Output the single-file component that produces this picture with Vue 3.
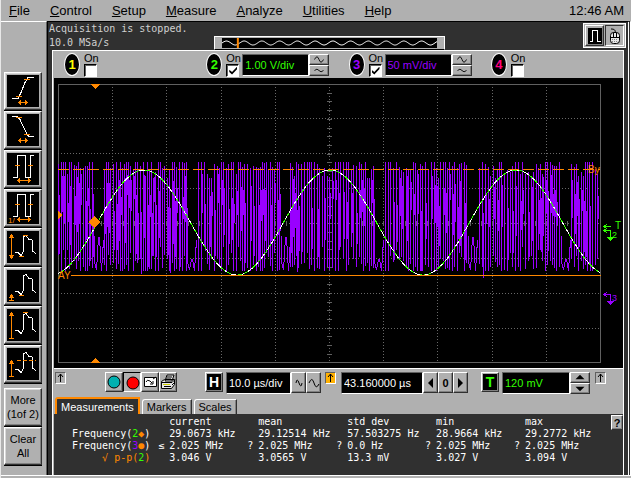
<template>
  <div class="scope">
    <header class="menubar">
      <nav>
        <a v-for="item in menu" :key="item" href="#"><u>{{ item[0] }}</u>{{ item.slice(1) }}</a>
      </nav>
      <time>12:46 AM</time>
    </header>

    <div class="body">
      <aside class="sidebar">
        <button v-for="tool in tools" :key="tool.name" class="tool" :aria-label="tool.name">
          <svg viewBox="0 0 32 32" shape-rendering="crispEdges">
            <rect width="32" height="32" fill="#000" />
            <path :d="tool.white" class="w" />
            <path :d="tool.orange" class="o" />
            <path v-if="tool.dash" :d="tool.dash" class="o" stroke-dasharray="4 2" />
            <path :d="tool.heads" fill="#ff8800" />
            <text v-if="tool.text" x="1" y="31" class="tool-text">{{ tool.text }}</text>
          </svg>
        </button>
        <button class="more">More<br>(1of 2)</button>
        <button>Clear<br>All</button>
      </aside>

      <main class="main">
        <section class="status">
          <p>Acquisition is stopped.<br>10.0 MSa/s</p>
          <div class="navigator">
            <svg viewBox="0 0 217 10" preserveAspectRatio="none">
              <rect width="217" height="10" fill="#000" />
              <path :d="navWave" class="w" />
              <rect x="15" width="2" height="10" fill="#ff8800" />
            </svg>
          </div>
          <div class="modes">
            <button class="pulse" aria-label="Waveform mode">
              <svg viewBox="0 0 14 16" shape-rendering="crispEdges">
                <path d="M2 13.5h2.500v-11h5v11h3" class="w" />
              </svg>
            </button>
            <button class="mouse" aria-label="Mouse mode">
              <svg viewBox="0 0 14 16">
                <path d="M3 1c3 0 5 1 4 4" fill="none" stroke="#000" />
                <rect x="2.500" y="4.500" width="9" height="11" rx="3" fill="#e8e8e8" stroke="#000" />
                <path d="M2.500 9.500h9M5.500 4.500v5M8.500 4.500v5" stroke="#000" />
                <path d="M4 11.500h6M4 13.500h6" stroke="#888" stroke-dasharray="1 1" />
              </svg>
            </button>
          </div>
        </section>

        <section class="panel">
          <div class="channels">
            <div v-for="ch in channels" :key="ch.id" class="channel" :class="'c' + ch.id">
              <span class="badge">{{ ch.id }}</span>
              <label class="on">On<input v-model="ch.on" type="checkbox"></label>
              <template v-if="ch.scale">
                <input v-model="ch.scale" class="field scale" :aria-label="'Channel ' + ch.id + ' scale'">
                <span class="stack">
                  <button aria-label="Larger">
                    <svg viewBox="0 0 18 10"><path d="M4 5q3-6 5 0t5 0" class="k" /></svg>
                  </button>
                  <button aria-label="Smaller">
                    <svg viewBox="0 0 18 10"><path d="M4 5q3-3 5 0t5 0" class="k" /></svg>
                  </button>
                </span>
              </template>
            </div>
          </div>

          <svg class="plot" viewBox="54 78 569 290" shape-rendering="crispEdges">
            <rect x="58.500" y="84.500" width="542" height="278" class="frame" />
            <path :d="grid" class="grid" />
            <path :d="ticks" class="frame" />
            <path :d="burst" class="purple" />
            <path :d="sine" class="green" />
            <path :d="sine" class="glint" />
            <path d="M58 169.500H600" class="o" stroke-dasharray="11 4" />
            <path d="M71 275.500H601" class="o" />
            <path d="M91 84h9l-4 5h-1zM91 363h9l-4-5h-1zM94.500 216l6 6-6 6-6-6zM58 211l4 4-4 5z" fill="#ff8800" />
            <text x="58" y="279" fill="#ff8800">AY</text>
            <text x="588" y="173" fill="#ff8800">By</text>
            <path d="M604 226.500h7M604 230.500h6.500v6M607 224l-3 2.500 3 2.500M607 228l-3 2.500 3 2.500" class="g" />
            <path d="M607 237h7l-3 4h-1z" fill="#33ff00" />
            <text x="612" y="238" fill="#33ff00" class="small">2</text>
            <text x="615" y="229" fill="#33ff00">T</text>
            <path d="M604 294.500h6.500v6M607 292l-3 2.500 3 2.500" class="purple" />
            <path d="M607 301h7l-3 4h-1z" fill="#9900ff" />
            <text x="612" y="301" fill="#9900ff" class="small">3</text>
          </svg>

          <div class="controls">
            <button class="marker" aria-label="Left edge"><svg viewBox="0 0 9 10"><path :d="upArrow" class="k" /></svg></button>
            <div class="group run">
              <button aria-label="Run"><svg viewBox="0 0 16 18"><circle cx="8" cy="9" r="6" fill="#00b0b0" stroke="#000" /></svg></button>
              <button class="pressed" aria-label="Stop"><svg viewBox="0 0 16 18"><circle cx="9" cy="10" r="6" fill="#f00" stroke="#000" /></svg></button>
              <button aria-label="Clear display">
                <svg viewBox="0 0 16 18">
                  <path d="M2.500 4.500h12v9h-12z" fill="#fff" stroke="#000" />
                  <path d="M4 9q1-3 4-1l2 2M8 11h3V8M11 6l3-2" fill="none" stroke="#000" />
                </svg>
              </button>
              <button aria-label="Print">
                <svg viewBox="0 0 16 18">
                  <path d="M5 8l2-6h7l-2 6zM1.500 8.500l3-2h10v5l-3 4h-10z" fill="#e8e8e8" stroke="#000" />
                  <path d="M7 4h5M6 6h5M2 9.500h10M4 13.500h7M12 9.500l3-3M12 12l3-3" stroke="#000" />
                  <path d="M3 11.500h7" stroke="#cc0" />
                </svg>
              </button>
            </div>
            <div class="group horizontal">
              <button class="letter"><b>H</b></button>
              <input v-model="timebase" class="field time" aria-label="Horizontal scale">
              <button aria-label="Faster"><svg viewBox="0 0 13 18"><path d="M4 9q1-6 3 0t3 0" class="k" /></svg></button>
              <button aria-label="Slower"><svg viewBox="0 0 13 18"><path d="M2 9q3-7 5 0t5 1" class="k" /></svg></button>
            </div>
            <button class="marker amber" aria-label="Trigger position"><svg viewBox="0 0 9 10"><path :d="upArrow" class="k" /></svg></button>
            <div class="group delay">
              <input v-model="position" class="field position" aria-label="Horizontal position">
              <button aria-label="Move left"><svg viewBox="0 0 13 18"><path d="M9 4v10L4 9z" /></svg></button>
              <button class="zero">0</button>
              <button aria-label="Move right"><svg viewBox="0 0 13 18"><path d="M4 4v10l5-5z" /></svg></button>
            </div>
            <div class="group trigger">
              <button class="letter lime"><b>T</b></button>
              <input v-model="level" class="field level" aria-label="Trigger level">
              <span class="stack">
                <button aria-label="Raise"><svg viewBox="0 0 18 10"><path d="M4 7h10L9 2z" /></svg></button>
                <button aria-label="Lower"><svg viewBox="0 0 18 10"><path d="M4 3h10L9 8z" /></svg></button>
              </span>
            </div>
            <button class="marker" aria-label="Right edge"><svg viewBox="0 0 9 10"><path :d="upArrow" class="k" /></svg></button>
          </div>

          <div class="tabs">
            <button v-for="tab in tabs" :key="tab" :class="{ active: tab === current }" @click="current = tab">{{ tab }}</button>
          </div>

          <div class="results">
            <table>
              <thead>
                <tr>
                  <td></td>
                  <th v-for="h in headings" :key="h" scope="col"><i></i>{{ h }}</th>
                </tr>
              </thead>
              <tbody>
                <tr v-for="(row, r) in rows" :key="r">
                  <th scope="row" :class="{ orange: row.check }">
                    {{ row.label }}(<span :class="'t' + row.ch">{{ row.ch }}</span><span class="orange">{{ row.mark }}</span>)
                  </th>
                  <td v-for="(value, i) in row.values" :key="i"><i>{{ row.flags[i] }}</i>{{ value }}</td>
                </tr>
              </tbody>
            </table>
            <button class="help">?</button>
          </div>
        </section>
      </main>
    </div>
  </div>
</template>

<script setup>
import { ref } from 'vue'

const menu = ['File', 'Control', 'Setup', 'Measure', 'Analyze', 'Utilities', 'Help']
const tabs = ['Measurements', 'Markers', 'Scales']
const headings = ['current', 'mean', 'std dev', 'min', 'max']

const current = ref('Measurements')
const timebase = ref('10.0 µs/div')
const position = ref('43.160000 µs')
const level = ref('120 mV')

const channels = ref([
  { id: 1, on: false },
  { id: 2, on: true, scale: '1.00 V/div' },
  { id: 3, on: true, scale: '50 mV/div' },
  { id: 4, on: false }
])

const rows = [
  { label: 'Frequency', ch: 2, mark: '◆', flags: [], values: ['29.0673 kHz', '29.12514 kHz', '57.503275 Hz', '28.9664 kHz', '29.2772 kHz'] },
  { label: 'Frequency', ch: 3, mark: '●', flags: ['≤', '?', '?', '?', '?'], values: ['2.025 MHz', '2.025 MHz', '0.0 Hz', '2.025 MHz', '2.025 MHz'] },
  { label: '√ p-p', ch: 2, mark: '', check: true, flags: [], values: ['3.046 V', '3.0565 V', '13.3 mV', '3.027 V', '3.094 V'] }
]

const pulse = 'M6 24.5h4.500v-22h8v22h5v-22h3'
const peak = 'M8 21.500h3l3 3 2-3 1-16 2-1 3 4h3l1 12 3 2'
const tools = [
  { name: 'Rise time', white: 'M5 23.500h6l3-6 4-10 3-5h6', orange: 'M9 21.500h6M17 4.500h6M12 27.500h8', heads: 'M11 27.500l3-3v6zM21 27.500l-3-3v6z' },
  { name: 'Fall time', white: 'M5 2.500h5l3 3 7 15 2 2h5', orange: 'M9 3.500h6M17 20.500h6M12 26.500h8', heads: 'M11 26.500l3-3v6zM21 26.500l-3-3v6z' },
  { name: 'Period', white: pulse, orange: 'M8 12.500h5M21 12.500h5M11 27.500h12', heads: 'M10 27.500l3-3v6zM24 27.500l-3-3v6z' },
  { name: 'Frequency', white: pulse, orange: 'M8 12.500h5M21 12.500h5M11 27.500h12', heads: 'M10 27.500l3-3v6zM24 27.500l-3-3v6z', text: '1/' },
  { name: 'V p-p', white: peak, orange: 'M4.500 5v21M16 4.500h5M12 25.500h5', heads: 'M4.500 3l3 4h-6zM4.500 28l3-4h-6z' },
  { name: 'V min', white: peak, orange: 'M12 25.500h5M4.500 27v3M2 30.500h5', heads: 'M4.500 24l3 4h-6z' },
  { name: 'V max', white: peak, orange: 'M4.500 5v24M2 29.500h5M16 3.500h5', heads: 'M4.500 3l3 4h-6z' },
  { name: 'V avg', white: peak, orange: 'M4.500 14v14M2 28.500h5', dash: 'M10 12.500h19', heads: 'M4.500 12l3 4h-6z' }
]

const upArrow = 'M4.500 9V1M2 4l2.500-3L7 4'

let navWave = 'M0 5'
for (let x = 1; x <= 217; x++) navWave += `L${x} ${(5 - 2 * Math.sin(x / 2.85)).toFixed(1)}`

// graticule: 10 x 8 divisions
let grid = ''
for (let i = 1; i < 10; i++) grid += `M${Math.round(58 + i * 54.2)}.5 84V362`
for (let i = 1; i < 8; i++) grid += `M58 ${Math.round(83 + i * 35)}.5H600`

let ticks = ''
for (let i = 1; i < 32; i++) ticks += `M327 ${Math.round(84 + i * 8.7)}.5h5`
for (let i = 1; i < 50; i++) ticks += `M${Math.round(58 + i * 10.84)}.5 221v5`

let sine = ''
for (let x = 58; x <= 600; x++) {
  const y = 222.5 - 52.5 * Math.cos((2 * Math.PI * (x - 144)) / 186)
  sine += `${sine ? 'L' : 'M'}${x} ${y.toFixed(1)}`
}

// carrier on channel 3, thinning out wherever the slow sine crosses its centre
let seed = 7
function rand(n) {
  seed = (seed * 1103515245 + 12345) % 2147483648
  return Math.floor((seed / 2147483648) * n)
}

let burst = ''
for (let x = 58; x < 600; x += 2 + (rand(5) > 2 ? 1 : 0)) {
  const gap = (x - 94) % 93.4
  if (gap >= 0 && gap < 9) continue
  const top = 162 + rand(3) * rand(9)
  const bottom = 271 - rand(4) * rand(9)
  burst += `M${x}.5 ${top}V${bottom}`
  if (rand(10) > 2) {
    const start = 174 + rand(40)
    burst += `M${x + 1}.5 ${start}V${start + 18 + rand(48)}`
  }
}
for (let i = 0; i < 6; i++) {
  const x = Math.round(94 + i * 93.4)
  const top = i % 2 ? 259 : 237
  burst += `M${x}.5 236V262L${x + 2}.5 270L${x + 4}.5 ${top}h1L${x + 7}.5 271L${x + 9}.5 240`
}
</script>

<style>
body {
  background: #b0b0b0;
}
</style>

<style scoped>
.scope {
  display: flex;
  flex-direction: column;
  min-height: 100vh;
  box-sizing: border-box;
  background: #b0b0b0;
  border-left: 1px solid #e8e8e8;
  color: #000;
  font: 11px "Liberation Sans", Arial, sans-serif;
}

button,
input {
  box-sizing: border-box;
  margin: 0;
  padding: 0;
  font: inherit;
}

button {
  background: #b0b0b0;
  border: 1px solid;
  border-color: #fff #303030 #303030 #fff;
  border-radius: 0;
  box-shadow: inset -1px -1px #808080;
  color: #000;
}

svg {
  display: block;
}

.w { fill: none; stroke: #fff; }
.o { fill: none; stroke: #ff8800; }
.k { fill: none; stroke: #000; }
.g { fill: none; stroke: #33ff00; }
.purple { fill: none; stroke: #9900ff; }

.menubar {
  display: flex;
  justify-content: space-between;
  height: 21px;
  padding: 0 7px 0 8px;
  font-size: 13px;
  line-height: 21px;
}

.menubar nav {
  display: flex;
  gap: 20px;
}

.menubar a {
  color: #000;
  text-decoration: none;
}

.body {
  display: flex;
  flex: 1;
  border-bottom: 2px solid #b0b0b0;
  box-shadow: inset 0 -1px #fff;
  padding-bottom: 1px;
}

.sidebar {
  display: flex;
  flex-direction: column;
  gap: 1px;
  flex: none;
  width: 38px;
  padding: 50px 4px 0 3px;
  border-top: 1px solid #fff;
  border-right: 1px solid #606060;
}

.sidebar button {
  height: 38px;
  box-shadow: inset -1px -1px #808080, inset 1px 1px #d8d8d8, 0 1px #000;
  line-height: 14px;
  white-space: nowrap;
}

.sidebar .more {
  margin-top: 4px;
}

.tool svg {
  width: 32px;
  height: 32px;
  margin: 0 auto;
}

.tool-text {
  font-size: 8px;
  fill: #ff8800;
}

.main {
  display: flex;
  flex-direction: column;
  flex: 1;
  min-width: 0;
  background: #303030;
  border-top: 1px solid #000;
  border-left: 1px solid #000;
  border-right: 3px double #fff;
  padding: 0 4px 0 4px;
}

.status {
  display: flex;
  justify-content: space-between;
  height: 28px;
}

.status p {
  flex: 0 0 165px;
  margin: 0 0 0 -3px;
  color: #d0d0d0;
  font: 10px/14px "DejaVu Sans Mono", monospace;
}

.navigator {
  align-self: flex-end;
  flex: 1;
  height: 14px;
  margin-right: 138px;
  box-sizing: border-box;
  padding: 1px 7px 2px;
  background: #b0b0b0;
  border: 1px solid #fff;
  border-bottom-color: #000;
}

.navigator svg {
  width: 100%;
  height: 10px;
}

.modes {
  display: flex;
  gap: 1px;
  align-self: flex-start;
  margin: 1px -2px 0 0;
  padding: 1px;
  background: #b0b0b0;
  border: 1px solid #fff;
}

.modes button {
  width: 19px;
  height: 21px;
}

.modes .mouse {
  border-color: #303030 #fff #fff #303030;
  box-shadow: none;
}

.modes svg {
  width: 14px;
  height: 16px;
  margin: 0 auto;
}

.pulse svg {
  background: #000;
}

.panel {
  display: flex;
  flex-direction: column;
  flex: 1;
  background: #b0b0b0;
  border-top: 1px solid #fff;
  border-left: 1px solid #fff;
  border-right: 1px solid #fff;
  padding-left: 1px;
}

.channels {
  display: grid;
  grid-template-columns: repeat(4, 1fr);
  height: 27px;
  padding-left: 10px;
  margin-right: -10px;
}

.channel {
  display: flex;
  align-items: center;
}

.badge {
  width: 14px;
  height: 21px;
  border: 1px solid #fff;
  border-radius: 50%;
  background: #000;
  font-size: 13px;
  font-weight: bold;
  line-height: 21px;
  text-align: center;
}

.c1 { color: #ffff00; }
.c2 { color: #33ff00; }
.c3 { color: #9900ff; }
.c4 { color: #ff0080; }

.on {
  display: flex;
  flex-direction: column;
  width: 15px;
  margin-left: 4px;
  margin-right: 1px;
  color: #000;
  line-height: 11px;
}

.on input {
  appearance: none;
  width: 13px;
  height: 13px;
  background: #fff;
  border: 1px solid;
  border-color: #000 #fff #fff #000;
  box-shadow: inset 1px 1px #606060;
}

.on input:checked::before {
  content: "";
  display: block;
  width: 8px;
  height: 8px;
  margin: 2px;
  background: #000;
  clip-path: polygon(0 40%, 35% 70%, 100% 0, 100% 30%, 35% 100%, 0 70%);
}

.field {
  height: 22px;
  padding: 0 2px;
  background: #000;
  border: 1px solid;
  border-color: #606060 #fff #fff #606060;
  color: #fff;
}

.scale {
  width: 67px;
  color: inherit;
}

.stack {
  display: flex;
  flex-direction: column;
}

.stack button {
  width: 20px;
  height: 11px;
}

.stack svg {
  width: 18px;
  height: 9px;
}

.plot {
  width: 100%;
  background: #000;
}

.frame {
  fill: none;
  stroke: #606060;
}

.grid {
  stroke: #686868;
  stroke-dasharray: 1 2;
}

.green {
  fill: none;
  stroke: #33ff00;
}

.glint {
  fill: none;
  stroke: #fff;
  stroke-dasharray: 3 4 6 5;
}

.plot text {
  font-size: 10px;
}

.plot .small {
  font-size: 9px;
}

.controls {
  display: flex;
  align-items: flex-start;
  height: 29px;
  box-sizing: border-box;
  padding: 3px 17px 0 1px;
  border-top: 1px solid #fff;
}

.marker {
  width: 11px;
  height: 12px;
  border-color: #606060 #fff #fff #606060;
  box-shadow: none;
}

.marker svg {
  width: 9px;
  height: 10px;
}

.amber {
  background: #ffb000;
}

.group {
  display: flex;
}

.group > button {
  width: 15px;
  height: 21px;
}

.group > button svg {
  width: 100%;
  height: 18px;
}

.run {
  margin-left: auto;
  margin-right: 28px;
}

.run > button {
  width: 18px;
  height: 20px;
}

.run .pressed {
  border-color: #000 #fff #fff #000;
  box-shadow: none;
}

.group .letter {
  width: 18px;
  height: 20px;
  margin-right: 3px;
}

.letter b {
  display: block;
  width: 14px;
  height: 16px;
  margin: 0 auto;
  background: #000;
  color: #fff;
  font-size: 14px;
  line-height: 16px;
}

.letter.lime b {
  color: #33ff00;
}

.time { width: 65px; }
.position { width: 82px; }
.level { width: 68px; color: #33ff00; }

.zero {
  font-weight: bold;
}

.horizontal { margin-right: 4px; }
.delay { margin: 0 13px 0 5px; }
.trigger { margin-right: 5px; }

.tabs {
  display: flex;
  align-items: flex-end;
  gap: 2px;
  height: 17px;
  padding-left: 1px;
}

.tabs button {
  height: 15px;
  padding: 0 4px;
  border-bottom: 0;
  border-top-left-radius: 3px;
  box-shadow: inset -1px 0 #808080;
  line-height: 14px;
}

.tabs .active {
  height: 17px;
  background: #303030;
  border: 2px solid #ff8800;
  border-bottom: 0;
  box-shadow: none;
  color: #fff;
}

.results {
  display: flex;
  align-items: flex-start;
  flex: 1;
  background: #303030;
}

table {
  flex: 1;
  width: 100%;
  margin: 2px 8px 0 0;
  border-collapse: collapse;
  table-layout: fixed;
  color: #fff;
  font: 10px/12px "DejaVu Sans Mono", monospace;
  text-align: left;
  white-space: nowrap;
}

table th,
table td {
  padding: 0;
  font-weight: normal;
}

table tr > :first-child {
  box-sizing: border-box;
  width: 19%;
  padding-right: 8px;
  text-align: right;
}

table i {
  display: inline-block;
  width: 11px;
  font-style: normal;
}

.orange { color: #ff8800; }
.t2 { color: #33ff00; }
.t3 { color: #9900ff; }

.help {
  flex: none;
  width: 12px;
  height: 15px;
  margin-top: 1px;
  font-weight: bold;
}
</style>
